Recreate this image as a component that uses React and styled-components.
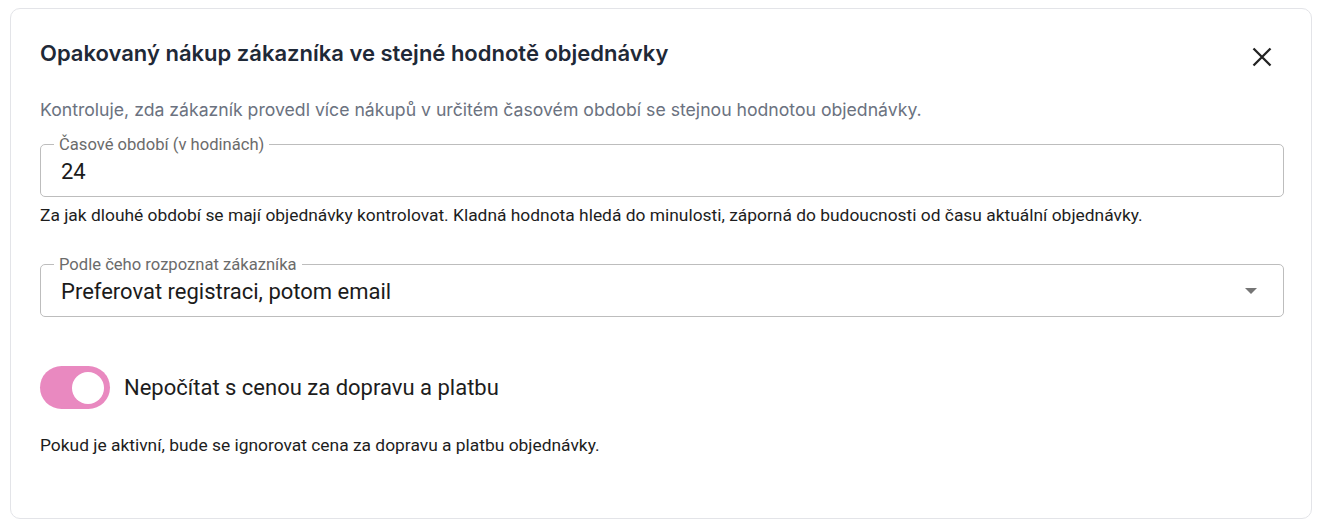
import React from "react";
import styled, { createGlobalStyle } from "styled-components";

const Global = createGlobalStyle`
  html, body { margin: 0; padding: 0; background: #ffffff; }
  body { font-family: Roboto, "Noto Sans", sans-serif; }
  * { box-sizing: border-box; }
`;

const Page = styled.div`
  padding: 8px 8px 9px 10px;
  width: 1319px;
`;

const Card = styled.section`
  width: 1302px;
  height: 511px;
  border: 1px solid #e3e4e8;
  border-radius: 10px;
  padding: 30px 28px 0 29px;
  display: flex;
  flex-direction: column;
  background: #fff;
`;

const Header = styled.div`
  display: flex;
  justify-content: space-between;
  align-items: flex-start;
  height: 28px;
`;

const Title = styled.h2`
  margin: 0;
  font-family: Inter, Roboto, sans-serif;
  font-weight: 600;
  font-size: 22px;
  line-height: 28px;
  color: #1f2937;
`;

const CloseButton = styled.button`
  border: 0;
  background: transparent;
  padding: 0;
  width: 22px;
  height: 22px;
  margin-right: 10px;
  margin-top: 7px;
  display: flex;
  align-items: center;
  justify-content: center;
  cursor: pointer;
  color: #222;
`;

const Description = styled.p`
  margin: 31px 0 0;
  font-family: Inter, Roboto, sans-serif;
  font-size: 17.65px;
  line-height: 24px;
  color: #6b7280;
`;

const FieldBox = styled.div`
  position: relative;
  margin-top: ${(p) => p.$mt}px;
  width: 1244px;
  height: 53px;
  display: flex;
  align-items: center;
  padding: 0 21px;
`;

const Outline = styled.fieldset`
  position: absolute;
  inset: -5px 0 0 0;
  margin: 0;
  padding: 0 8px;
  border: 1px solid #bdbdbd;
  border-radius: 5px;
  pointer-events: none;
`;

const Legend = styled.legend`
  padding: 0 5px;
  font-family: Roboto, sans-serif;
  font-size: 16.6px;
  line-height: 10px;
  color: #6b6b6b;
  margin-left: 5px;
  & > span {
    position: relative;
    top: 1px;
  }
`;

const Value = styled.div`
  font-family: Roboto, sans-serif;
  font-size: 22px;
  line-height: 26px;
  color: #1b1b1b;
  margin-top: 2px;
  flex: 1;
`;

const Arrow = styled.span`
  width: 0;
  height: 0;
  border-left: 6px solid transparent;
  border-right: 6px solid transparent;
  border-top: 6px solid #757575;
  margin-right: 6px;
  margin-top: 1px;
`;

const Helper = styled.p`
  margin: ${(p) => p.$mt}px 0 0;
  font-family: Roboto, sans-serif;
  font-size: 17.4px;
  line-height: 20px;
  color: #1d1d1d;
`;

const ToggleRow = styled.label`
  display: flex;
  align-items: center;
  gap: 14px;
  margin-top: 49px;
  height: 43px;
`;

const Track = styled.span`
  width: 70px;
  height: 43px;
  border-radius: 22px;
  background: #e989c0;
  display: flex;
  align-items: center;
  justify-content: flex-end;
  padding-right: 6px;
`;

const Thumb = styled.span`
  width: 32px;
  height: 32px;
  border-radius: 50%;
  background: #ffffff;
`;

const ToggleText = styled.span`
  font-family: Roboto, sans-serif;
  font-size: 22px;
  color: #1d1d1d;
`;

function Field({ label, value, select, mt }) {
  return (
    <FieldBox $mt={mt}>
      <Outline>
        <Legend>
          <span>{label}</span>
        </Legend>
      </Outline>
      <Value>{value}</Value>
      {select && <Arrow />}
    </FieldBox>
  );
}

export default function App() {
  return (
    <Page>
      <Global />
      <Card>
        <Header>
          <Title>Opakovaný nákup zákazníka ve stejné hodnotě objednávky</Title>
          <CloseButton aria-label="Zavřít">
            <svg width="22" height="22" viewBox="0 0 22 22">
              <path d="M2.5 2.5 L19.5 19.5 M19.5 2.5 L2.5 19.5" stroke="#222" strokeWidth="2.3" strokeLinecap="butt" fill="none" />
            </svg>
          </CloseButton>
        </Header>
        <Description>
          Kontroluje, zda zákazník provedl více nákupů v určitém časovém období se stejnou hodnotou objednávky.
        </Description>
        <Field mt={22} label="Časové období (v hodinách)" value="24" />
        <Helper $mt={8}>
          Za jak dlouhé období se mají objednávky kontrolovat. Kladná hodnota hledá do minulosti, záporná do budoucnosti od času aktuální objednávky.
        </Helper>
        <Field mt={39} label="Podle čeho rozpoznat zákazníka" value="Preferovat registraci, potom email" select />
        <ToggleRow>
          <Track>
            <Thumb />
          </Track>
          <ToggleText>Nepočítat s cenou za dopravu a platbu</ToggleText>
        </ToggleRow>
        <Helper $mt={26}>
          Pokud je aktivní, bude se ignorovat cena za dopravu a platbu objednávky.
        </Helper>
      </Card>
    </Page>
  );
}
